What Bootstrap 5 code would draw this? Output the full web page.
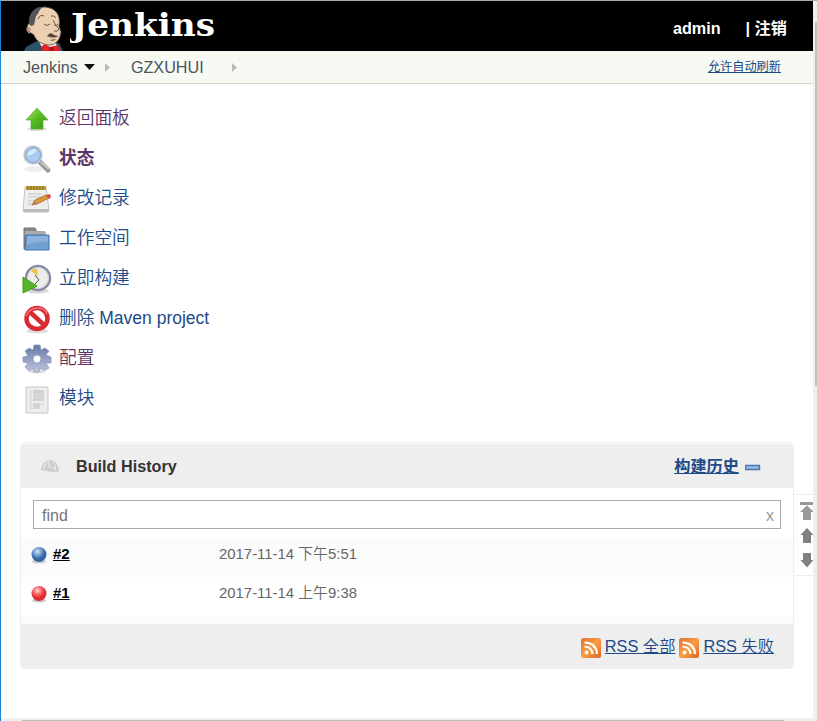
<!DOCTYPE html>
<html lang="zh-CN">
<head>
<meta charset="utf-8">
<meta name="viewport" content="width=device-width, initial-scale=1">
<title>GZXUHUI [Jenkins]</title>
<link href="https://cdn.jsdelivr.net/npm/bootstrap@5.3.0/dist/css/bootstrap.min.css" rel="stylesheet">
<style>
body{font-family:"Liberation Sans","Noto Sans CJK SC",sans-serif;color:#333;font-size:16px;line-height:1.25}
svg{display:block;flex:none}
.window{height:721px;border-left:1px solid #1883d7;border-top:1px solid #aaa}
.top-bar{height:50px;background:#000;padding-left:20px;padding-right:26px}
.top-bar a{color:#fff;font-weight:700;font-size:16.2px}
.top-bar .user{margin-right:25px}
.logo-text{margin-left:5px}
.crumbs{height:33px;background:#f6faf2;border-bottom:1px solid #d3d7cf;padding:0 32px 0 22px}
.crumbs span{color:#4d545d;font-size:16.2px}
.refresh{color:#204a87;font-size:12.2px;line-height:16px}
.tasks{padding:14px 0 0 20px}
.tasks a{height:40px;font-size:17.7px;color:#204a87;gap:6px;line-height:40px}
.tasks .latin{font-size:17.5px}
.tasks a.seen{color:#5c3566}
.tasks svg{margin-top:2px}
.history{margin:24px 19px 0 19px;height:227px;border:1px solid #ededed;border-radius:5px;padding-top:1px}
.history-head{height:44px;background:#eee;border-radius:4px 4px 0 0;padding:0 32px 0 19px;font-weight:700}
.history-head span{font-size:16.2px}
.history-head a{color:#204a87;font-size:16.2px;line-height:20px}
.collapse-icon{margin:4px 0 0 6px}
.find-wrap{padding:12px 12px 9px}
.find-box{height:29px;border:1px solid #a9a9a9;padding:2px 6px 0 8px;color:#757575}
.find-box .clear{color:#999}
.build-row{height:39px;padding:0 0 5px 8px}
.build-row.alt{background:#fbfbfb}
.build-row a{color:#000;font-weight:700;width:166px;margin-left:4px;font-size:15px;padding-bottom:2px}
.build-row time{color:#666;font-size:14.9px;padding-bottom:2px}
.spacer{height:8px;background:#fbfbfb}
.history-foot{background:#eee;gap:4px;padding-right:19px}
.history-foot svg{margin-top:3px}
.history-foot a{color:#204a87;font-size:16.300px;line-height:20px}
.thin{font-weight:350}
.vbar{width:4px;background:#f0f0f0;padding:21px 0 0 2px}
.vbar div{height:364px;background:#c1c1c1}
.hbar{height:3px;background:#f0f0f0;padding:2px 29px 0 21px}
.hbar div{height:1px;background:#bdbdbd}
.pager{position:absolute;right:0;top:493px;width:19px;height:82px;border:solid #ededed;border-width:1px 0;padding:6px 0 0 6px;overflow:hidden}
</style>
<script src="https://cdn.jsdelivr.net/npm/bootstrap@5.3.0/dist/js/bootstrap.bundle.min.js"></script>
</head>
<body class="bg-white overflow-hidden">
<div class="window d-flex">
<div class="flex-grow-1 d-flex flex-column position-relative overflow-hidden">
<header class="top-bar d-flex align-items-center">
<svg width="44" height="50" viewBox="0 0 44 50">
<path d="M3 50 5 46 16 40 38 42 42 50Z" fill="#2b5368"/>
<path d="M18 41 23 50H37L35 42Z" fill="#eee"/>
<path d="M10 32C6 30 5 23 9 22 8 13 14 6 24 6 35 7 40 14 38 25L40 31C39 39 35 44 28 44 20 43 15 40 13 34Z" fill="#ebcfb1" stroke="#594a3e" stroke-width=".8"/>
<path d="M8 23C7 12 14 5 22 6 17 9 18 13 15 15L13 24 10 25Z" fill="#55565b"/>
<path d="M10 29C5 23 5 30 9 32" fill="none" stroke="#bd8f72" stroke-width="1.500"/>
<path d="M17 18Q19 13 23 15M30 15Q33 14 35 17M23 23Q26 26 29 23M33 24Q35 26 37 23M32 19Q34 24 38 28Q37 31 33 30" fill="none" stroke="#6b5342"/>
<path d="M26 35C29 31 31 32 33 34L37 35C34 37 31 37 26 35ZM29 39Q32 41 35 38" fill="#59473b"/>
<path d="M21 45 24 43 29 46 33 45 37 44 39 50 21 50Z" fill="#e32327"/>
<path d="M28 46 33 46 33 50 28 50Z" fill="#a91721"/>
</svg>
<svg class="logo-text" width="150" height="48" viewBox="0 0 150 48"><text x="1" y="34" font-family="DejaVu Serif" font-weight="700" font-size="32" textLength="144" lengthAdjust="spacingAndGlyphs" fill="#fff">Jenkins</text></svg>
<a class="user ms-auto text-decoration-none pt-1" href="#">admin</a>
<a class="text-decoration-none pt-1" href="#">| 注销</a>
</header>
<nav class="crumbs d-flex align-items-center">
<span>Jenkins</span>
<svg width="53" height="12" viewBox="0 0 53 12"><path d="M6 3H17L11.500 9Z" fill="#111"/><path d="M27 2 32 6.500 27 11Z" fill="#babdb6"/></svg>
<span>GZXUHUI</span>
<svg width="36" height="12" viewBox="0 0 36 12"><path d="M28 2 33 6.500 28 11Z" fill="#babdb6"/></svg>
<a class="refresh ms-auto" href="#">允许自动刷新</a>
</nav>
<div class="tasks d-flex flex-column">
<a class="seen d-flex align-items-center text-decoration-none thin" href="#">
<svg width="32" height="32" viewBox="0 0 32 32"><defs><linearGradient id="green" x2="1" y2="1"><stop stop-color="#a1e65e"/><stop offset=".55" stop-color="#53b51f"/><stop offset="1" stop-color="#399817"/></linearGradient></defs><ellipse cx="16" cy="26" rx="10" ry="2" fill="#ddd"/><path d="M16 5 27 17H22V26H10V17H5Z" fill="url(#green)" stroke="#56ac2d" stroke-width=".7"/></svg>返回面板</a>
<a class="seen d-flex align-items-center text-decoration-none fw-bold" href="#">
<svg width="32" height="32" viewBox="0 0 32 32"><ellipse cx="13" cy="26" rx="10" ry="3" fill="#eee"/><path d="M19 19 27 27" stroke="#999" stroke-width="5" stroke-linecap="round"/><path d="M20 19 28 26" stroke="#ccc" stroke-width="2"/><circle cx="12" cy="12" r="8.500" fill="#a9cbf0" stroke="#c6cacf" stroke-width="2.500"/><circle cx="12" cy="12" r="7.500" fill="none" stroke="#7ea8d6"/><path d="M6 13Q7 6 15 6 16 11 6 13" fill="#dceafa"/></svg>状态</a>
<a class="d-flex align-items-center text-decoration-none thin" href="#">
<svg width="32" height="32" viewBox="0 0 32 32"><path d="M4 4H25L28 27 27 29H3L2 27Z" fill="#eee" stroke="#c4c4c4"/><path d="M2 26H28V29H3Z" fill="#bbb"/><path d="M5 3H25V7H5Z" fill="#bea039"/><path d="M7 3V7M10 3V7M13 3V7M16 3V7M19 3V7M22 3V7" stroke="#82691d"/><path d="M7 11H21M7 14H20M7 18H15M6 21H12" stroke="#c5c5c5"/><path d="M11 22 14 17 25 12 28 15 16 21Z" fill="#d9973b" stroke="#a96a25" stroke-width=".8"/><path d="M25 12 29 11 30 14 28 16Z" fill="#d44d40"/><path d="M11 22 14 18 16 21Z" fill="#a48a68"/></svg>修改记录</a>
<a class="d-flex align-items-center text-decoration-none thin" href="#">
<svg width="32" height="32" viewBox="0 0 32 32"><path d="M3 5H14L16 9H24V26H3Z" fill="#888" stroke="#777"/><path d="M4 8H24V12H4Z" fill="#aaa"/><path d="M5 12H28V27H4Z" fill="#729fcf" stroke="#3e73b5"/><path d="M6 13H27V19Q16 18 6 22Z" fill="#8bb1dc"/></svg>工作空间</a>
<a class="d-flex align-items-center text-decoration-none thin" href="#">
<svg width="32" height="32" viewBox="0 0 32 32"><ellipse cx="17" cy="28" rx="11" ry="2.500" fill="#d7d7d7"/><circle cx="17" cy="15" r="12" fill="#eceeea" stroke="#8989a0" stroke-width="2.500"/><circle cx="17" cy="15" r="10.500" fill="none" stroke="#cfcfd8"/><path d="M17 13 10 8Q13 5 16 6Z" fill="#e8c344"/><path d="M14 12 18 17 14 21" fill="none" stroke="#555"/><path d="M2 14 16 23 2 30Z" fill="#59b52d" stroke="#429c1b"/></svg>立即构建</a>
<a class="d-flex align-items-center text-decoration-none thin" href="#">
<svg width="32" height="32" viewBox="0 0 32 32"><ellipse cx="16" cy="28" rx="11" ry="2.500" fill="#ddd"/><circle cx="16" cy="15.500" r="10.500" fill="#fff" stroke="#d82c31" stroke-width="4.500"/><path d="M9 9 23 22" stroke="#d82c31" stroke-width="4.500"/><path d="M5 13Q8 5 17 5 24 5 26 11" fill="none" stroke="#ed7478" stroke-width="1.500"/></svg><span>删除 <span class="latin">Maven project</span></span></a>
<a class="seen d-flex align-items-center text-decoration-none thin" href="#">
<svg width="32" height="32" viewBox="0 0 32 32"><defs><linearGradient id="gear" x2="0" y2="1"><stop stop-color="#6178a5"/><stop offset="1" stop-color="#c3c5df"/></linearGradient></defs><ellipse cx="16" cy="28" rx="9" ry="2.500" fill="#ddd"/><path fill-rule="evenodd" d="M13 2H19L20 7L24 5 28 8 25 12 30 14 30 20 25 20 28 25 24 27 19 25 18 29H13L12 25 8 28 4 24 7 20 2 19 2 14 7 13 4 8 8 5 12 7ZM16 12A4 4 0 1 0 16 20A4 4 0 1 0 16 12Z" fill="url(#gear)" stroke="#8e9abd" stroke-width=".8"/></svg>配置</a>
<a class="d-flex align-items-center text-decoration-none thin" href="#">
<svg width="32" height="32" viewBox="0 0 32 32"><path d="M5 4H27V30H5Z" fill="#eee" stroke="#c6c6c6"/><path d="M8 7H11V27H8Z" fill="#e2e2e2"/><path d="M12 7H23V18H12ZM12 20H19V26H12Z" fill="#d2d2d2"/><path d="M12 11H23M12 14H23M19 20H23M19 22H23" stroke="#ddd"/></svg>模块</a>
</div>
<section class="history d-flex flex-column">
<div class="history-head d-flex align-items-center">
<svg width="20" height="18" viewBox="0 0 20 18"><path d="M1 13Q2 4 10 3 18 4 19 14L17 15Q9 15 1 13Z" fill="#cdcdcd"/><path d="M4 12Q4 7 8 5M9 4V11M13 5Q16 8 16 13M10 9 16 13" fill="none" stroke="#eee"/></svg>
<span class="ms-3">Build History</span>
<a class="ms-auto" href="#">构建历史</a>
<svg class="collapse-icon" width="16" height="8" viewBox="0 0 16 8"><path d="M.500 1.500H14.500V5.500H.500Z" fill="#9cbadf" stroke="#4575b5" stroke-width="1.400"/></svg>
</div>
<div class="find-wrap"><div class="find-box d-flex align-items-center"><span>find</span><span class="clear ms-auto">x</span></div></div>
<div class="build-row alt d-flex align-items-center">
<svg width="20" height="20" viewBox="0 0 20 20"><defs><radialGradient id="blue" cx=".4" cy=".3"><stop stop-color="#dce6e8"/><stop offset=".55" stop-color="#6d9acc"/><stop offset="1" stop-color="#3564a4"/></radialGradient></defs><ellipse cx="10" cy="16.500" rx="7" ry="2" fill="#ccc"/><circle cx="10" cy="9.500" r="7.500" fill="url(#blue)"/></svg><a href="#">#2</a><time>2017-11-14 <span class="thin">下午</span>5:51</time></div>
<div class="build-row d-flex align-items-center">
<svg width="20" height="20" viewBox="0 0 20 20"><defs><radialGradient id="red" cx=".4" cy=".3"><stop stop-color="#ffd6d6"/><stop offset=".55" stop-color="#f96568"/><stop offset="1" stop-color="#e22a30"/></radialGradient></defs><ellipse cx="10" cy="16.500" rx="7" ry="2" fill="#ccc"/><circle cx="10" cy="9.500" r="7.500" fill="url(#red)"/></svg><a href="#">#1</a><time>2017-11-14 <span class="thin">上午</span>9:38</time></div>
<div class="spacer"></div>
<div class="history-foot flex-grow-1 d-flex align-items-center justify-content-end">
<svg width="20" height="20" viewBox="0 0 20 20"><defs><linearGradient id="rss" x2="1" y2="1"><stop stop-color="#df7335"/><stop offset=".5" stop-color="#f99d42"/><stop offset="1" stop-color="#da652a"/></linearGradient></defs><rect width="20" height="20" rx="2.500" fill="url(#rss)"/><circle cx="5.500" cy="14.500" r="2" fill="#fff"/><path d="M3.500 8.500Q11 9 11.500 16M3.500 4.500Q15.500 5 16 16" fill="none" stroke="#fff" stroke-width="2.200"/></svg><a class="thin" href="#">RSS 全部</a>
<svg width="20" height="20" viewBox="0 0 20 20"><rect width="20" height="20" rx="2.500" fill="url(#rss)"/><circle cx="5.500" cy="14.500" r="2" fill="#fff"/><path d="M3.500 8.500Q11 9 11.500 16M3.500 4.500Q15.500 5 16 16" fill="none" stroke="#fff" stroke-width="2.200"/></svg><a class="thin" href="#">RSS 失败</a>
</div>
</section>
<div class="pager"><svg width="14" height="70" viewBox="0 0 14 70"><path d="M0 1H14V4H0ZM7 4.500 14 11H11V19H3V11H0Z" fill="#999"/><path d="M7 27 13.500 34H11V42H3V34H.500ZM3 52H11V59H13.500L7 66.500.500 59H3Z" fill="#808080"/></svg></div>
<div class="hbar mt-auto"><div></div></div>
</div>
<div class="vbar"><div></div></div>
</div>
</body>
</html>
